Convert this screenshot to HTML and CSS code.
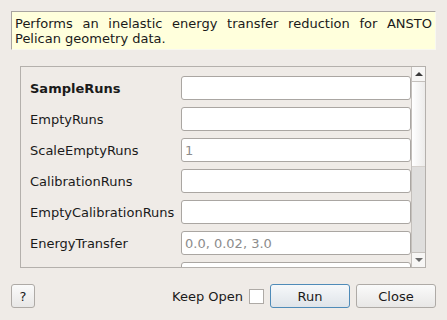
FILE: index.html
```html
<!DOCTYPE html>
<html lang="en">
<head>
  <meta charset="UTF-8" />
  <title>ReductionPelican</title>
  <link rel="stylesheet" href="styles.css">
</head>
<body>
  <div class="dialog">
    <div class="desc">Performs an inelastic energy transfer reduction for ANSTO Pelican geometry data.</div>

    <div class="panel">
      <div class="rows">
        <label class="bold">SampleRuns</label><input type="text" />
        <label>EmptyRuns</label><input type="text" />
        <label>ScaleEmptyRuns</label><input type="text" placeholder="1" />
        <label>CalibrationRuns</label><input type="text" />
        <label>EmptyCalibrationRuns</label><input type="text" />
        <label>EnergyTransfer</label><input type="text" placeholder="0.0, 0.02, 3.0" />
        <label></label><input type="text" />
      </div>
      <div class="scrollbar">
        <div class="arrow up"></div>
        <div class="slider"></div>
        <div class="track"></div>
        <div class="arrow down"></div>
      </div>
    </div>

    <div class="footer">
      <button class="btn help">?</button>
      <span class="spacer"></span>
      <span class="keep">Keep Open</span>
      <span class="check"></span>
      <button class="btn run">Run</button>
      <button class="btn">Close</button>
    </div>
  </div>
</body>
</html>
```

FILE: styles.css
```css
body {
  margin: 0;
  background: #efebe7;
  font-family: 'DejaVu Sans', sans-serif;
  font-size: 13px;
  color: #1a1a1a;
}
.dialog {
  width: 447px;
  height: 320px;
  padding-top: 11px;
  box-sizing: border-box;
}
.desc {
  margin: 0 11px;
  height: 39px;
  box-sizing: border-box;
  padding: 4px 3px 0 3px;
  background: #ffffdc;
  border: 1px solid;
  border-color: #a8a4a0 #f8f8f0 #f8f8f0 #a8a4a0;
  text-align: justify;
  line-height: 15px;
}
.panel {
  margin: 16px 0 0 20px;
  width: 406px;
  height: 202px;
  box-sizing: border-box;
  border: 1px solid #b4b0ac;
  display: flex;
  overflow: hidden;
}
.rows {
  flex: 1;
  display: grid;
  grid-template-columns: 151px 230px;
  grid-auto-rows: 24px;
  row-gap: 7px;
  align-items: center;
  padding: 9px 0 0 9px;
  overflow: hidden;
}
.rows label {
  white-space: nowrap;
}
.rows .bold {
  font-weight: bold;
}
.rows input {
  height: 24px;
  box-sizing: border-box;
  border: 1px solid #aaa6a2;
  border-radius: 3px;
  background: #fff;
  font-family: 'DejaVu Sans', sans-serif;
  font-size: 13px;
  padding: 0 3px;
  outline: none;
}
.rows input::placeholder {
  color: #8c8c8c;
}
.scrollbar {
  width: 13px;
  display: flex;
  flex-direction: column;
  border-left: 1px solid #c4c0bc;
}
.arrow {
  height: 14px;
  background: #f7f6f5;
  position: relative;
}
.arrow.up {
  border-bottom: 1px solid #c4c0bc;
}
.arrow.down {
  border-top: 1px solid #c4c0bc;
}
.arrow::after {
  content: "";
  position: absolute;
  left: 3px;
  border-left: 4px solid transparent;
  border-right: 4px solid transparent;
}
.arrow.up::after {
  top: 5px;
  border-bottom: 4px solid #3a3a3a;
}
.arrow.down::after {
  top: 5px;
  border-top: 4px solid #6a6a6a;
}
.slider {
  height: 84px;
  background: linear-gradient(to right, #ffffff, #ecebea);
  border-bottom: 1px solid #d4d0cc;
}
.track {
  flex: 1;
  background: #dfdedd;
}
.footer {
  display: flex;
  align-items: center;
  gap: 6px;
  margin: 16px 11px 0 11px;
}
.spacer {
  flex: 1;
}
.btn {
  height: 24px;
  width: 80px;
  border: 1px solid #aeaaa6;
  border-radius: 3px;
  background: linear-gradient(#fafafa, #e8e7e6);
  font-family: 'DejaVu Sans', sans-serif;
  font-size: 13px;
  color: #1a1a1a;
  padding: 0;
}
.btn.help {
  width: 24px;
}
.btn.run {
  border-color: #4f8bb8;
  background: linear-gradient(#f6f8fa, #dfe4e9);
}
.check {
  width: 13px;
  height: 13px;
  border: 1px solid #aeaaa6;
  background: #fff;
}
```
